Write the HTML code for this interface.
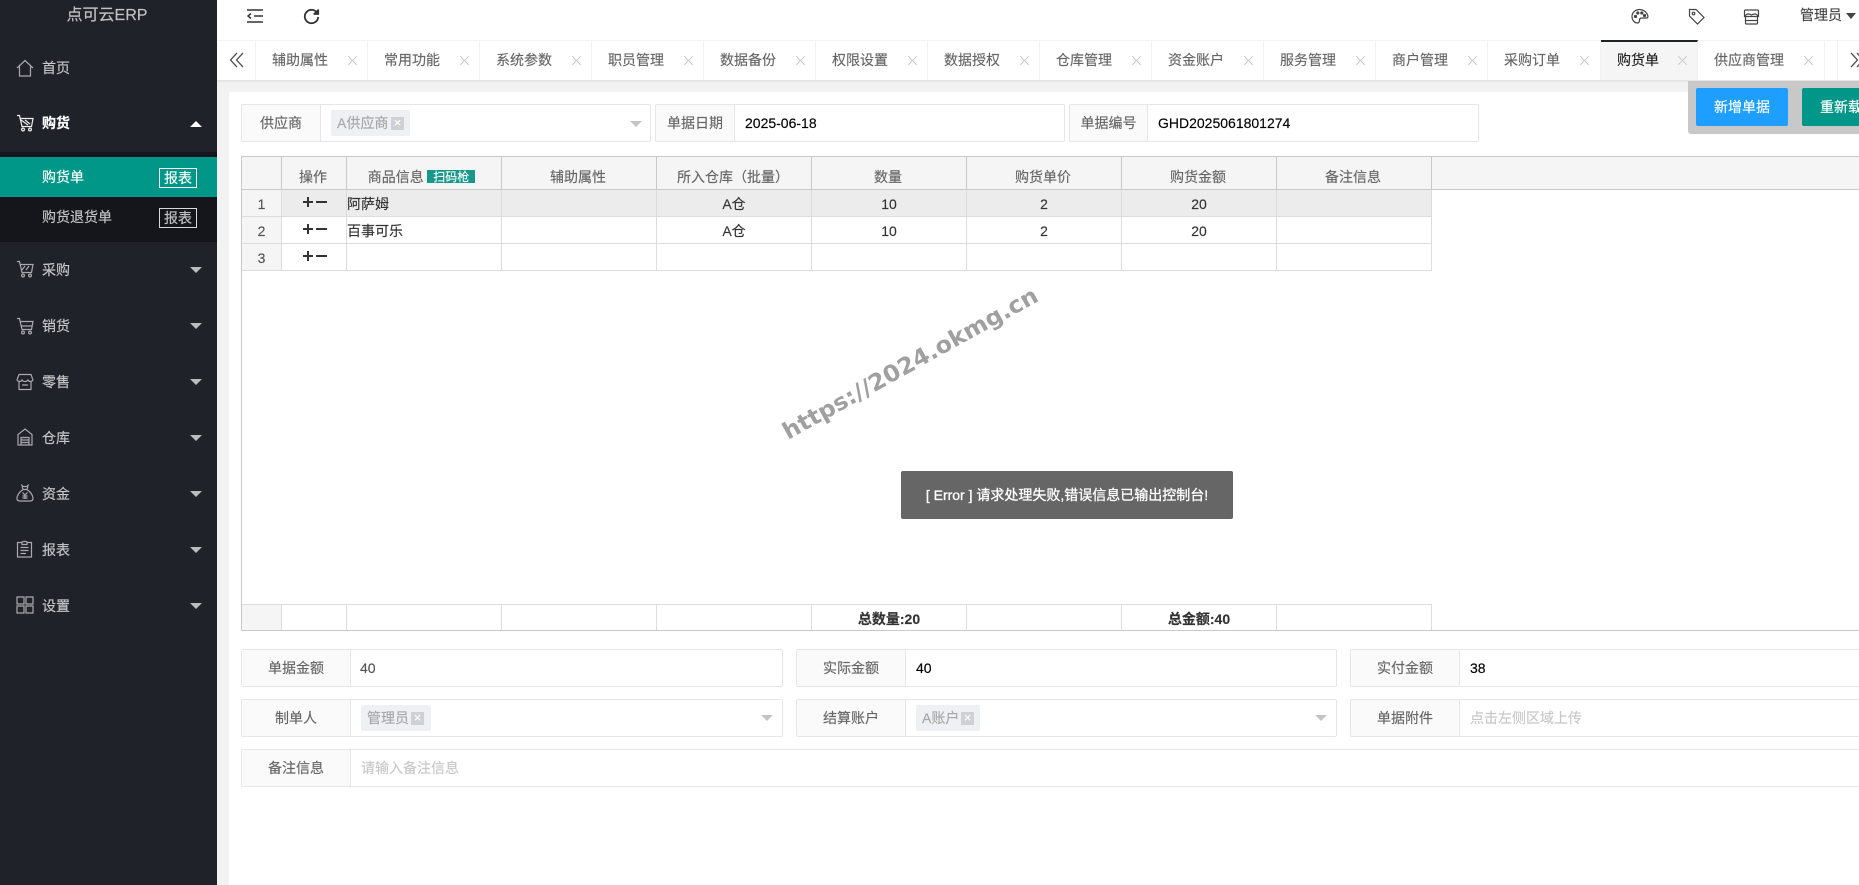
<!DOCTYPE html>
<html lang="zh-CN">
<head>
<meta charset="utf-8">
<title>点可云ERP</title>
<style>
*{box-sizing:border-box;margin:0;padding:0}
html{width:1859px;height:885px;overflow:hidden}
body{position:relative;width:1859px;height:885px;overflow:hidden;background:#f2f2f2;font-family:"Liberation Sans","Noto Sans CJK SC",sans-serif;font-size:14px;color:#333;-webkit-text-stroke:.15px}
.a{position:absolute}
#side{position:absolute;left:0;top:0;width:217px;height:885px;background:#20222a;color:rgba(255,255,255,.7);overflow:hidden}
.m{position:absolute;left:42px;line-height:20px;height:20px;font-size:14px;white-space:nowrap}
.ic{position:absolute;left:16px;width:18px;height:18px;fill:none;stroke:#a9aaad;stroke-width:1.2}
.tri{position:absolute;left:190px;width:0;height:0;border-left:6px solid transparent;border-right:6px solid transparent}
.down{border-top:6px solid rgba(255,255,255,.7)}
.up{border-bottom:6px solid #fff}
.bd{position:absolute;left:159px;width:38px;height:20px;border:1px solid #fff;line-height:18px;text-align:center;font-size:14px;white-space:nowrap}
#top{position:absolute;left:217px;top:0;width:1642px;height:40px;background:#fff}
#tabs{position:absolute;left:217px;top:40px;width:1642px;height:41px;background:#fff;border-top:1px solid #f3f3f3;border-bottom:1px solid #e4e4e4;box-shadow:0 1px 2px rgba(0,0,0,.05)}
.tb{position:absolute;top:40px;height:40px;border-right:1px solid #f2f2f2;color:#666;line-height:40px;padding-left:16px;white-space:nowrap;font-size:14px}
.x{position:absolute;top:16px;width:9px;height:9px;background:linear-gradient(45deg,transparent 45%,#cfcfcf 45%,#cfcfcf 55%,transparent 55%),linear-gradient(-45deg,transparent 45%,#cfcfcf 45%,#cfcfcf 55%,transparent 55%)}
#card{position:absolute;left:229px;top:92px;width:1630px;height:793px;background:#fff;border-radius:2px 0 0 0}
.f{position:absolute;height:38px;border:1px solid #e6e6e6;border-radius:2px;background:#fff}
.l{position:absolute;left:0;top:0;height:36px;background:#fafafa;border-right:1px solid #e6e6e6;color:#666;text-align:center;line-height:36px;white-space:nowrap}
.v{position:absolute;top:0;line-height:36px;white-space:nowrap;color:#000}
.tag{position:absolute;top:5px;height:26px;background:#eef0f3;border-radius:2px;color:#a6a6a6;line-height:26px;white-space:nowrap;padding-left:6px}
.tx{position:absolute;top:7px;width:13px;height:13px;background:#cdd0d5;color:#fff;line-height:12px;text-align:center;font-size:13px}
.ar{position:absolute;width:0;height:0;border-left:6px solid transparent;border-right:6px solid transparent;border-top:6px solid #c4c4c4}
.row{position:absolute;left:242px;display:flex}
.row>div{flex:none;width:155px;border-right:1px solid #dcdcdc;text-align:center;white-space:nowrap;overflow:hidden}
.row>div:nth-child(1){width:40px;background:#f5f5f5;color:#555}
.row>div:nth-child(2){width:65px}
.hd{top:157px;height:33px;line-height:40px;color:#666;background:#f5f5f5;border-bottom:1px solid #c9c9c9}
.hd>div{border-right-color:#c9c9c9!important;height:32px;padding-right:2px}
.r{height:27px;line-height:28px;color:#333;border-bottom:1px solid #dcdcdc;font-size:14px}
.r>div{height:26px}
.pl{position:absolute;width:10px;height:10px;background:linear-gradient(#333,#333) center/10px 2px no-repeat,linear-gradient(#333,#333) center/2px 10px no-repeat}
.mn{position:absolute;width:11px;height:2px;background:#333}
.lft{text-align:left!important}
</style>
</head>
<body>

<div id="side">
  <div class="a" style="left:0;top:6px;width:214px;text-align:center;font-size:16px;line-height:20px;color:#c2c3c5">点可云ERP</div>

  <svg class="ic" style="top:59px" viewBox="0 0 18 18"><path d="M1 9 9 1.500 17 9M3.500 7.500V17H14.500V7.500"/></svg>
  <div class="m" style="top:58px">首页</div>

  <svg class="ic" style="top:114px;stroke:#eee" viewBox="0 0 18 18"><path d="M1 1.500H3.500L6 12.500H15.500L17 4.500H4.500M5 6 12 11M9 6l5 4"/><circle cx="7" cy="15.500" r="1.400"/><circle cx="14" cy="15.500" r="1.400"/></svg>
  <div class="m" style="top:113px;color:#fff;font-weight:bold">购货</div>
  <div class="tri up" style="top:121px"></div>

  <div class="a" style="left:0;top:152px;width:217px;height:90px;background:#14161b"></div>
  <div class="a" style="left:0;top:157px;width:217px;height:40px;background:#009688"></div>
  <div class="m" style="top:167px;color:#fff">购货单</div>
  <div class="bd" style="top:168px;color:#fff">报表</div>
  <div class="m" style="top:207px">购货退货单</div>
  <div class="bd" style="top:208px;border-color:#d8d8d8">报表</div>

  <svg class="ic" style="top:260px" viewBox="0 0 18 18"><path d="M1 1.500H3.500L6 12.500H15.500L17 4.500H4.500M6 10 9 6M10 10l3-4"/><circle cx="7" cy="15.500" r="1.400"/><circle cx="14" cy="15.500" r="1.400"/></svg>
  <div class="m" style="top:260px">采购</div>
  <div class="tri down" style="top:267px"></div>

  <svg class="ic" style="top:317px" viewBox="0 0 18 18"><path d="M1 1.500H3.500L6 12.500H15.500L17 4.500H4.500M5.500 9H16"/><circle cx="7" cy="15.500" r="1.400"/><circle cx="14" cy="15.500" r="1.400"/></svg>
  <div class="m" style="top:316px">销货</div>
  <div class="tri down" style="top:323px"></div>

  <svg class="ic" style="top:373px" viewBox="0 0 18 18"><path d="M3 1.500H15L17 7C15.500 9 13 9 12 7 11 9 7 9 6 7 5 9 2.500 9 1 7ZM3 9V16.500H15V9M6 12H12"/></svg>
  <div class="m" style="top:372px">零售</div>
  <div class="tri down" style="top:379px"></div>

  <svg class="ic" style="top:428px" viewBox="0 0 18 18"><path d="M9 1 16 6.500V17H2V6.500ZM5 9.500H13V17H5ZM5 12H13M5 14.500H13"/></svg>
  <div class="m" style="top:428px">仓库</div>
  <div class="tri down" style="top:435px"></div>

  <svg class="ic" style="top:484px" viewBox="0 0 18 18"><path d="M6 1.500C7.500 3 10.500 3 12 1.500L11 5.500H7ZM7 5.500C3.500 8 1 11.500 1 14.500 1 16 2 17 4 17H14C16 17 17 16 17 14.500 17 11.500 14.500 8 11 5.500M6.500 8.500 9 11 11.500 8.500M9 11V15M6.500 12H11.500M6.500 14H11.500"/></svg>
  <div class="m" style="top:484px">资金</div>
  <div class="tri down" style="top:491px"></div>

  <svg class="ic" style="top:540px" viewBox="0 0 18 18"><path d="M6 2.500H1.500V17H15.500V2.500H11M6 4.500V2.500C6 1 11 1 11 2.500V4.500ZM4.500 7.500H12.500M4.500 10.500H12.500M4.500 13.500H10"/></svg>
  <div class="m" style="top:540px">报表</div>
  <div class="tri down" style="top:547px"></div>

  <svg class="ic" style="top:596px" viewBox="0 0 18 18"><path d="M1 1H8V8H1ZM10 1H17V8H10ZM1 10H8V17H1ZM10 10H17V17H10Z"/></svg>
  <div class="m" style="top:596px">设置</div>
  <div class="tri down" style="top:603px"></div>
</div>

<div id="top"></div>
<svg class="a" style="left:247px;top:9px" width="16" height="14" viewBox="0 0 16 14" fill="none" stroke="#333" stroke-width="1.500"><path d="M0 1H16M7 7H16M0 13H16M4 4.500 1 7 4 9.500"/></svg>
<svg class="a" style="left:303px;top:8px" width="17" height="17" viewBox="0 0 17 17" fill="none" stroke="#333" stroke-width="1.800"><path d="M14.500 5.500A6.700 6.700 0 1 0 15.200 9"/><path d="M15 1V6H10" fill="#333" stroke="none"/><path d="M15.500 1.500V6.300H10.700" stroke-width="1.200"/></svg>

<svg class="a" style="left:1631px;top:8px" width="18" height="16" viewBox="0 0 18 16" fill="none" stroke="#444" stroke-width="1.200"><path d="M8.500 1.500C4.500 1.500 1 4.500 1 8.500c0 3.500 2.500 6.500 5.500 6.500 2 0 2-2 2-3 0-1.300 1-2 2.500-2H15.500C17 10 17.300 8.500 16.500 6.800 15.200 3.500 12 1.500 8.500 1.500Z"/><circle cx="4.500" cy="8.500" r="1" fill="#444"/><circle cx="6.800" cy="5" r="1" fill="#444"/><circle cx="10.800" cy="5" r="1" fill="#444"/><circle cx="13.500" cy="7.500" r="1" fill="#444"/></svg>
<svg class="a" style="left:1688px;top:8px" width="17" height="17" viewBox="0 0 17 17" fill="none" stroke="#444" stroke-width="1.200"><path d="M1.500 1.500H8L16 9.500 9.500 16 1.500 8Z"/><circle cx="5.500" cy="5.500" r="1.300"/></svg>
<svg class="a" style="left:1743px;top:9px" width="17" height="16" viewBox="0 0 17 16" fill="none" stroke="#444" stroke-width="1.200"><path d="M2.500 1H14.500Q15.500 1 15.500 2V7.500H1.500V2Q1.500 1 2.500 1ZM1.500 7.500C3.500 4.500 6 4.500 8.500 6 11 4.500 13.500 4.500 15.500 7.500M2.500 7.500V14Q2.500 15 3.500 15H13.500Q14.500 15 14.500 14V7.500M2.500 11.500H14.500"/></svg>
<div class="a" style="left:1800px;top:5px;line-height:20px;color:#444;white-space:nowrap">管理员</div>
<div class="a" style="left:1846px;top:13px;width:0;height:0;border-left:5.500px solid transparent;border-right:5.500px solid transparent;border-top:6px solid #444"></div>

<div id="tabs"></div>
<svg class="a" style="left:229px;top:52px" width="16" height="16" viewBox="0 0 16 16" fill="none" stroke="#555" stroke-width="1.300"><path d="M8 1 1.500 8 8 15M14 1 7.500 8 14 15"/></svg>
<div class="a" style="left:255px;top:41px;width:1px;height:39px;background:#f2f2f2"></div>

<div class="tb" style="left:256px;width:112px">辅助属性<i class="x" style="left:92px"></i></div>
<div class="tb" style="left:368px;width:112px">常用功能<i class="x" style="left:92px"></i></div>
<div class="tb" style="left:480px;width:112px">系统参数<i class="x" style="left:92px"></i></div>
<div class="tb" style="left:592px;width:112px">职员管理<i class="x" style="left:92px"></i></div>
<div class="tb" style="left:704px;width:112px">数据备份<i class="x" style="left:92px"></i></div>
<div class="tb" style="left:816px;width:112px">权限设置<i class="x" style="left:92px"></i></div>
<div class="tb" style="left:928px;width:112px">数据授权<i class="x" style="left:92px"></i></div>
<div class="tb" style="left:1040px;width:112px">仓库管理<i class="x" style="left:92px"></i></div>
<div class="tb" style="left:1152px;width:112px">资金账户<i class="x" style="left:92px"></i></div>
<div class="tb" style="left:1264px;width:112px">服务管理<i class="x" style="left:92px"></i></div>
<div class="tb" style="left:1376px;width:112px">商户管理<i class="x" style="left:92px"></i></div>
<div class="tb" style="left:1488px;width:113px">采购订单<i class="x" style="left:92px"></i></div>
<div class="tb" style="left:1601px;width:97px;background:#f5f5f5;color:#222;border-top:2px solid #20222a;line-height:37px;height:40px">购货单<i class="x" style="left:77px;top:14px"></i></div>
<div class="tb" style="left:1698px;width:127px">供应商管理<i class="x" style="left:106px"></i></div>
<div class="a" style="left:1837px;top:41px;width:1px;height:39px;background:#f2f2f2"></div>
<svg class="a" style="left:1850px;top:52px" width="16" height="16" viewBox="0 0 16 16" fill="none" stroke="#555" stroke-width="1.300"><path d="M1 1 7.500 8 1 15M7 1 13.500 8 7 15"/></svg>

<div id="card"></div>

<!-- top form -->
<div class="f" style="left:241px;top:104px;width:410px">
  <div class="l" style="width:79px">供应商</div>
  <div class="tag" style="left:89px;width:79px">A供应商<span class="tx" style="left:60px">×</span></div>
  <div class="ar" style="left:388px;top:16px"></div>
</div>
<div class="f" style="left:655px;top:104px;width:410px">
  <div class="l" style="width:79px">单据日期</div>
  <div class="v" style="left:89px">2025-06-18</div>
</div>
<div class="f" style="left:1069px;top:104px;width:410px">
  <div class="l" style="width:78px">单据编号</div>
  <div class="v" style="left:88px">GHD2025061801274</div>
</div>

<!-- grid -->
<div class="a" style="left:241px;top:156px;width:1618px;height:1px;background:#c9c9c9"></div>
<div class="a" style="left:241px;top:157px;width:1618px;height:33px;background:#f5f5f5;border-bottom:1px solid #c9c9c9"></div>
<div class="a" style="left:241px;top:156px;width:1px;height:475px;background:#c9c9c9"></div>
<div class="a" style="left:241px;top:630px;width:1618px;height:1px;background:#c9c9c9"></div>

<div class="row hd">
  <div></div>
  <div style="background:#f5f5f5;color:#666">操作</div>
  <div style="padding-right:5px">商品信息<span style="display:inline-block;width:48px;height:13px;background:#16988a;color:#fff;font-size:12px;line-height:14px;margin-left:3.500px;vertical-align:-1px;overflow:hidden">扫码枪</span></div>
  <div>辅助属性</div>
  <div>所入仓库（批量）</div>
  <div>数量</div>
  <div>购货单价</div>
  <div>购货金额</div>
  <div>备注信息</div>
</div>

<div class="row r" style="top:190px;background:#ececec">
  <div>1</div><div></div><div class="lft">阿萨姆</div><div></div><div>A仓</div><div>10</div><div>2</div><div>20</div><div></div>
</div>
<div class="row r" style="top:217px">
  <div>2</div><div></div><div class="lft">百事可乐</div><div></div><div>A仓</div><div>10</div><div>2</div><div>20</div><div></div>
</div>
<div class="row r" style="top:244px">
  <div>3</div><div></div><div></div><div></div><div></div><div></div><div></div><div></div><div></div>
</div>

<i class="pl" style="left:303px;top:197px"></i><i class="mn" style="left:316px;top:201px"></i>
<i class="pl" style="left:303px;top:224px"></i><i class="mn" style="left:316px;top:228px"></i>
<i class="pl" style="left:303px;top:251px"></i><i class="mn" style="left:316px;top:255px"></i>

<div class="row" style="top:604px;height:26px;line-height:29px;border-top:1px solid #dcdcdc;font-weight:bold">
  <div></div><div></div><div></div><div></div><div></div><div>总数量:20</div><div></div><div>总金额:40</div><div></div>
</div>

<!-- watermark -->
<svg class="a" style="left:770px;top:280px;overflow:visible" width="280" height="170">
  <text x="18" y="160" transform="rotate(-29 18 160)" font-family="'DejaVu Sans',sans-serif" font-size="23" font-weight="bold" fill="#a0a0a0" stroke="none" textLength="288" lengthAdjust="spacingAndGlyphs">https://2024.okmg.cn</text>
</svg>

<!-- toast -->
<div class="a" style="left:901px;top:471px;width:332px;height:48px;background:#666;border-radius:2px;color:#fff;text-align:center;line-height:48px;white-space:nowrap;-webkit-text-stroke:.3px #fff">[ Error ] 请求处理失败,错误信息已输出控制台!</div>

<!-- bottom form -->
<div class="f" style="left:241px;top:649px;width:542px">
  <div class="l" style="width:109px">单据金额</div>
  <div class="v" style="left:118px;color:#555">40</div>
</div>
<div class="f" style="left:796px;top:649px;width:541px">
  <div class="l" style="width:109px">实际金额</div>
  <div class="v" style="left:119px">40</div>
</div>
<div class="f" style="left:1350px;top:649px;width:540px">
  <div class="l" style="width:109px">实付金额</div>
  <div class="v" style="left:119px">38</div>
</div>

<div class="f" style="left:241px;top:699px;width:542px">
  <div class="l" style="width:109px">制单人</div>
  <div class="tag" style="left:119px;width:70px">管理员<span class="tx" style="left:50px">×</span></div>
  <div class="ar" style="left:519px;top:15px"></div>
</div>
<div class="f" style="left:796px;top:699px;width:541px">
  <div class="l" style="width:109px">结算账户</div>
  <div class="tag" style="left:119px;width:64px">A账户<span class="tx" style="left:45px">×</span></div>
  <div class="ar" style="left:518px;top:15px"></div>
</div>
<div class="f" style="left:1350px;top:699px;width:540px">
  <div class="l" style="width:109px">单据附件</div>
  <div class="v" style="left:119px;color:#c8c8c8">点击左侧区域上传</div>
</div>

<div class="f" style="left:241px;top:749px;width:1650px">
  <div class="l" style="width:109px">备注信息</div>
  <div class="v" style="left:119px;color:#c8c8c8">请输入备注信息</div>
</div>

<!-- action toolbar -->
<div class="a" style="left:1688px;top:81px;width:171px;height:53px;background:#c8c8c8;border-radius:0 0 0 3px"></div>
<div class="a" style="left:1696px;top:88px;width:92px;height:38px;background:#1e9fff;border-radius:2px;color:#fff;text-align:center;line-height:38px;white-space:nowrap">新增单据</div>
<div class="a" style="left:1802px;top:88px;width:57px;height:38px;background:#009688;border-radius:2px 0 0 2px;color:#fff;line-height:38px;white-space:nowrap;overflow:hidden;padding-left:18px">重新载入</div>

</body>
</html>
